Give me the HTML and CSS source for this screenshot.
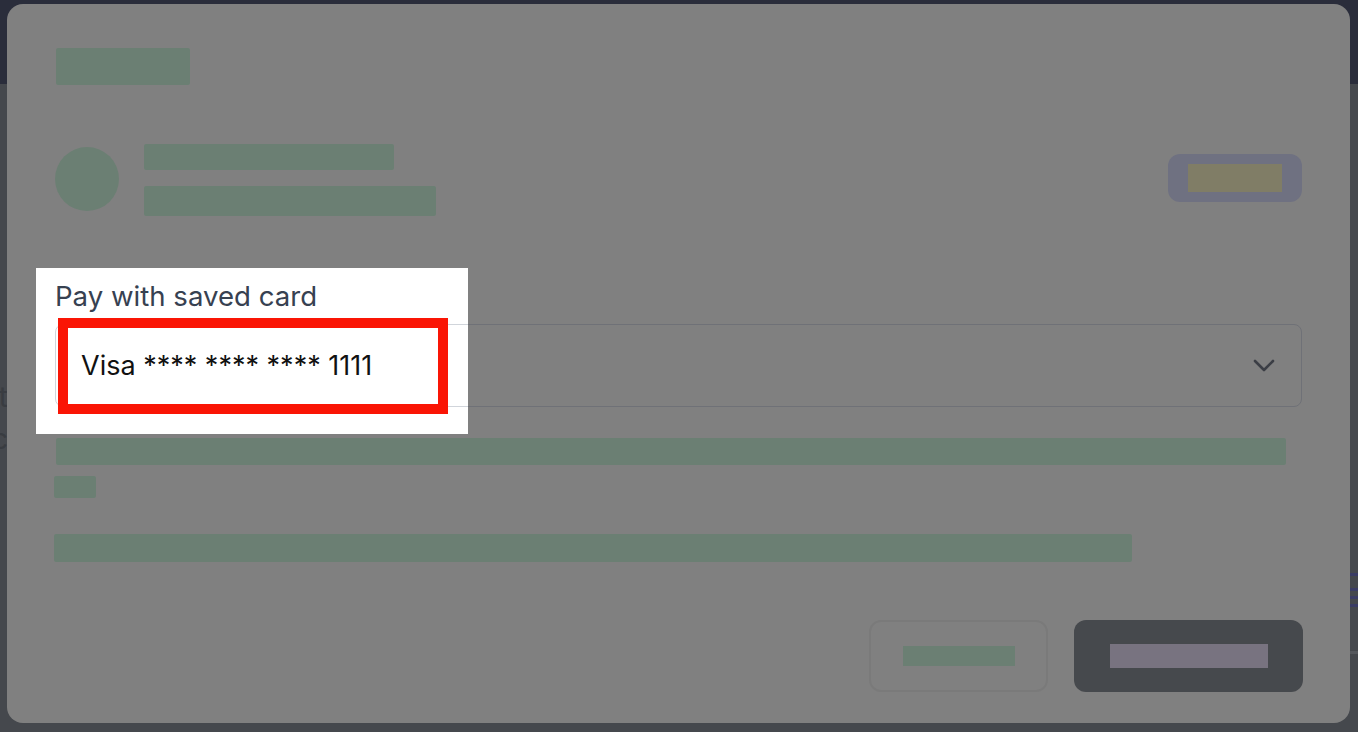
FILE: index.html
```html
<!DOCTYPE html>
<html>
<head>
    <title>Checkout - Pay with saved card</title>
    <link rel="stylesheet" href="styles.css">
</head>
<body>
    <div class="topbar"></div>
    <div class="page">
        <div class="side-text">
            <div class="side-line">Set</div>
            <div class="side-line">Rec</div>
        </div>
        <div class="side-lines">
            <div class="side-rule blue"></div>
            <div class="side-rule blue gap-lg"></div>
            <div class="side-rule blue"></div>
            <div class="side-rule blue"></div>
            <div class="side-rule grey"></div>
        </div>
    </div>

    <div class="modal">
        <div class="ph title-ph"></div>

        <div class="merchant">
            <div class="avatar"></div>
            <div class="merchant-text">
                <div class="ph name-ph"></div>
                <div class="ph desc-ph"></div>
            </div>
            <div class="badge"><div class="badge-inner"></div></div>
        </div>

        <div class="field">
            <div class="field-label hide">Pay with saved card</div>
            <div class="select">
                <span class="hide">Visa **** **** **** 1111</span>
                <svg class="chevron" width="22" height="14" viewBox="0 0 22 14">
                    <path d="M2 2 L11 11 L20 2" fill="none" stroke="#3b3e45" stroke-width="2.6" stroke-linecap="round" stroke-linejoin="round"/>
                </svg>
            </div>
        </div>

        <div class="ph note-ph"></div>
        <div class="ph tiny-ph"></div>
        <div class="ph terms-ph"></div>

        <div class="actions">
            <div class="btn btn-outline"><div class="btn-ph green"></div></div>
            <div class="btn btn-dark"><div class="btn-ph purple"></div></div>
        </div>
    </div>

    <!-- spotlight on the highlighted field -->
    <div class="spotlight">
        <div class="field-label">Pay with saved card</div>
        <div class="select select-lit">Visa **** **** **** 1111</div>
    </div>
    <div class="marker"></div>
</body>
</html>
```

FILE: styles.css
```css
body {
    margin: 0;
    height: 732px;
    overflow: hidden;
    font-family: Inter, "Noto Sans", sans-serif;
    background: #45484d;
}
.topbar { height: 84px; background: #2a2d3b; }
.page {
    display: flex;
    justify-content: space-between;
    height: 648px;
}
.side-text {
    width: 8px;
    overflow: hidden;
    direction: rtl;
    padding-top: 292px;
}
.side-line {
    white-space: nowrap;
    font-size: 28px;
    line-height: 42px;
    color: #393c41;
}
.side-lines { width: 10px; padding-top: 489px; }
.side-rule { height: 3px; margin-bottom: 5px; }
.side-rule.blue { background: #3b3d66; }
.side-rule.gap-lg { margin-top: 12px; }
.side-rule.grey { background: #55585d; margin-top: 44px; }

.modal {
    position: absolute;
    left: 7px;
    top: 4px;
    width: 1343px;
    height: 719px;
    box-sizing: border-box;
    padding: 44px 48px 31px 48px;
    background: #808080;
    border-radius: 16px;
    display: flex;
    flex-direction: column;
}
.ph { background: #6b7f73; border-radius: 2px; }
.title-ph { width: 134px; height: 37px; margin-left: 1px; }

.merchant {
    display: flex;
    align-items: center;
    margin-top: 59px;
}
.avatar {
    width: 64px;
    height: 64px;
    border-radius: 50%;
    background: #6b7f73;
    margin-top: -2px;
}
.merchant-text {
    display: flex;
    flex-direction: column;
    gap: 16px;
    margin-left: 25px;
}
.name-ph { width: 250px; height: 26px; }
.desc-ph { width: 292px; height: 30px; }
.badge {
    margin-left: auto;
    margin-top: -4px;
    width: 134px;
    height: 48px;
    border-radius: 12px;
    background: #6f7181;
    display: flex;
    align-items: center;
    justify-content: center;
}
.badge-inner { width: 94px; height: 28px; background: #807d66; }

.field { margin-top: 62px; }
.field-label {
    font-size: 27.6px;
    line-height: 34px;
    color: #374151;
}
.hide { visibility: hidden; }
.select {
    margin-top: 12px;
    height: 83px;
    box-sizing: border-box;
    border: 1px solid #6f7177;
    border-radius: 8px;
    padding: 0 26px 0 25px;
    display: flex;
    align-items: center;
    justify-content: space-between;
    font-size: 27px;
    color: #000;
}

.note-ph { width: 1230px; height: 27px; margin-top: 31px; margin-left: 1px; }
.tiny-ph { width: 42px; height: 22px; margin-top: 11px; margin-left: -1px; }
.terms-ph { width: 1078px; height: 28px; margin-top: 36px; margin-left: -1px; }

.actions {
    margin-top: auto;
    margin-right: -1px;
    display: flex;
    justify-content: flex-end;
    gap: 26px;
}
.btn {
    height: 72px;
    box-sizing: border-box;
    border-radius: 12px;
    display: flex;
    align-items: center;
    justify-content: center;
}
.btn-outline { width: 179px; border: 2px solid #7a7a7a; }
.btn-dark { width: 229px; background: #46494d; }
.btn-ph.green { width: 112px; height: 20px; background: #6b7f73; }
.btn-ph.purple { width: 158px; height: 24px; background: #787380; }

.spotlight {
    position: absolute;
    left: 36px;
    top: 268px;
    width: 432px;
    height: 166px;
    box-sizing: border-box;
    padding: 11px 0 0 19px;
    background: #fff;
    overflow: hidden;
}
.spotlight .select { margin-top: 11px; }
.select-lit {
    width: 1247px;
    border-color: #d1d5db;
    color: #111;
}
.marker {
    position: absolute;
    left: 58px;
    top: 318px;
    width: 390px;
    height: 96px;
    box-sizing: border-box;
    border: 10px solid #fa1505;
}
```
